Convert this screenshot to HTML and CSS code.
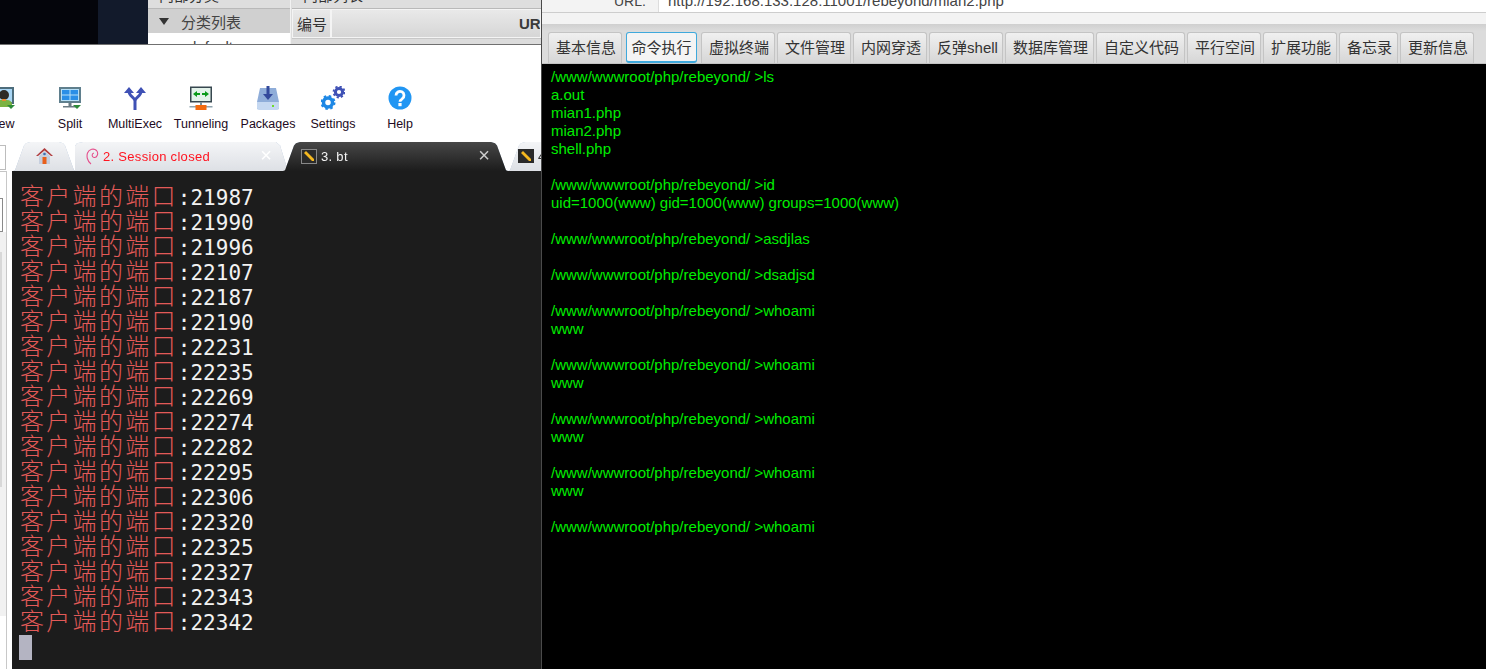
FILE: index.html
```html
<!DOCTYPE html>
<html lang="zh">
<head>
<meta charset="utf-8">
<title>Screenshot</title>
<link rel="stylesheet" href="styles.css">
</head>
<body>
<div class="page">
  <section class="left">
    <div class="backdrop">
      <div class="bd-black"></div>
      <div class="bd-navy"></div>
      <div class="tree">
        <div class="tree-head"><span>内部分类</span></div>
        <div class="tree-row"><span class="tri"></span><span>分类列表</span></div>
        <div class="tree-item">default</div>
      </div>
      <div class="list">
        <div class="list-head"><span>内部列表</span></div>
        <div class="list-cols">
          <div class="col col-id">编号</div>
          <div class="col col-url">URL</div>
        </div>
      </div>
    </div>

    <div class="toolbar">
      <div class="tool tool-view">
        <svg width="24" height="24" viewBox="0 0 24 24"><rect x="1" y="1" width="22" height="17" fill="#4d6d7c"/><rect x="3" y="3" width="18" height="13" fill="#a9d6f5"/><path d="M4 21c0-5 3-7 6-7h6c3 0 5 2 5 4v3z" fill="#7cb342"/><circle cx="13" cy="9" r="5" fill="#2e2a25"/><rect x="11" y="13" width="4" height="2" fill="#e68a2e"/><path d="M16 19h8l-4 4z" fill="#2e8b3a"/></svg>
        <span class="tool-label">View</span>
      </div>
      <div class="tool tool-split">
        <svg width="24" height="24" viewBox="0 0 24 24"><rect x="1" y="1" width="22" height="16" fill="#5f7f8d"/><rect x="3" y="3" width="18" height="12" fill="#b6dff7"/><rect x="4" y="4" width="7.500" height="4.500" fill="#2b8fe6"/><rect x="12.500" y="4" width="7.500" height="4.500" fill="#2b8fe6"/><rect x="4" y="9.500" width="7.500" height="4.500" fill="#2b8fe6"/><rect x="12.500" y="9.500" width="7.500" height="4.500" fill="#2b8fe6"/><rect x="10.500" y="17" width="3" height="3" fill="#6b7b83"/><rect x="5" y="20" width="13" height="1.500" fill="#6b7b83"/><path d="M15 19h8l-4 4z" fill="#2e8b3a"/></svg>
        <span class="tool-label">Split</span>
      </div>
      <div class="tool tool-multi">
        <svg width="24" height="24" viewBox="0 0 24 24"><path d="M12 24V15C12 11 6 11 6 5M12 15c0-4 6-4 6-10" fill="none" stroke="#3f51b5" stroke-width="3"/><path d="M1 7l5-6 5 6zM13 7l5-6 5 6z" fill="#3f51b5"/></svg>
        <span class="tool-label">MultiExec</span>
      </div>
      <div class="tool tool-tunnel">
        <svg width="24" height="24" viewBox="0 0 24 24"><rect x="1" y="0.500" width="22" height="16" fill="#37474f"/><rect x="2.500" y="2" width="19" height="13" fill="#e3f2ea"/><path d="M4 8l4-3v2h3v2H8v2zM20 8l-4-3v2h-3v2h3v2z" fill="#0a9a1a"/><rect x="11" y="16" width="2" height="4" fill="#78909c"/><rect x="0.500" y="20" width="23" height="1.500" fill="#90a4ae"/><rect x="6.500" y="19" width="11" height="5" fill="#f26a0f"/></svg>
        <span class="tool-label">Tunneling</span>
      </div>
      <div class="tool tool-pack">
        <svg width="24" height="24" viewBox="0 0 24 24"><path d="M4 2h16l3 14v7H1v-7z" fill="#8fadd9"/><path d="M1 16h22v6a2 2 0 0 1-2 2H3a2 2 0 0 1-2-2z" fill="#c5d8f1"/><rect x="10.500" y="0" width="3" height="10" fill="#33499b"/><path d="M7 8h10l-5 6z" fill="#33499b"/><rect x="16" y="19" width="2" height="2" fill="#6fdc2c"/></svg>
        <span class="tool-label">Packages</span>
      </div>
      <div class="tool tool-set">
        <svg width="24" height="24" viewBox="0 0 24 24"><circle cx="7" cy="16.500" r="4.500" fill="none" stroke="#1e88e5" stroke-width="3.500"/><circle cx="7" cy="16.500" r="6.500" fill="none" stroke="#1e88e5" stroke-width="2" stroke-dasharray="2.500 2.600"/><circle cx="18" cy="6" r="3.600" fill="none" stroke="#3f51b5" stroke-width="3"/><circle cx="18" cy="6" r="5.500" fill="none" stroke="#3f51b5" stroke-width="1.800" stroke-dasharray="2.200 2.100"/></svg>
        <span class="tool-label">Settings</span>
      </div>
      <div class="tool tool-help">
        <svg width="24" height="24" viewBox="0 0 24 24"><circle cx="12" cy="12" r="11.500" fill="#2196f3"/><path d="M8 9.500a4 4 0 1 1 6.300 3.200c-1.400 1-2.300 1.600-2.300 3" fill="none" stroke="#fff" stroke-width="2.800"/><rect x="10.400" y="17" width="3.200" height="3.200" fill="#fff"/></svg>
        <span class="tool-label">Help</span>
      </div>
    </div>

    <div class="tabbar">
      <div class="tab-stub"></div>
      <div class="tab-strip">
        <div class="tab tab-home">
          <svg width="17" height="16" viewBox="0 0 17 16"><path d="M3 8l5.500-5L14 8v8H3z" fill="#c6cfdf"/><path d="M8.500 0L0 8h2L8.500 2.500 15 8h2z" fill="#b03c3e"/><rect x="6.500" y="9" width="4" height="7" fill="#e8601c"/><circle cx="8.500" cy="6" r="1.300" fill="#3d6fb4"/></svg>
        </div>
        <div class="tab tab-closed">
          <svg class="swirl" width="13" height="17" viewBox="0 0 13 17"><path d="M5 16C1 13 0.500 8 1.500 5 3 1 8 0 10.500 2.500 13 5.500 11 10 8 9.500 5.500 9 5.500 5.500 8 5" fill="none" stroke="#e5508c" stroke-width="1.100"/></svg>
          <span class="tab-text">2. Session closed</span>
          <span class="tab-x">×</span>
        </div>
        <div class="tab tab-active">
          <span class="key key-on"><svg width="12" height="12" viewBox="0 0 12 12"><path d="M1 3l2-2 2 2 6 6v2H9z" fill="#f5b81f"/></svg></span>
          <span class="tab-text">3. bt</span>
          <span class="tab-x">×</span>
        </div>
        <div class="tab tab-next">
          <span class="key"><svg width="12" height="12" viewBox="0 0 12 12"><path d="M1 3l2-2 2 2 6 6v2H9z" fill="#f5b81f"/></svg></span>
          <span class="tab-text">4</span>
        </div>
      </div>
    </div>

    <div class="session">
      <div class="gutter">
        <div class="gutter-col">
          <div class="gutter-top"></div>
          <div class="gutter-box"></div>
          <div class="gutter-track"><div class="gutter-thumb"></div></div>
        </div>
      </div>
      <div class="terminal">
        <div class="line"><span class="cn">客户端的端口</span>:21987</div>
        <div class="line"><span class="cn">客户端的端口</span>:21990</div>
        <div class="line"><span class="cn">客户端的端口</span>:21996</div>
        <div class="line"><span class="cn">客户端的端口</span>:22107</div>
        <div class="line"><span class="cn">客户端的端口</span>:22187</div>
        <div class="line"><span class="cn">客户端的端口</span>:22190</div>
        <div class="line"><span class="cn">客户端的端口</span>:22231</div>
        <div class="line"><span class="cn">客户端的端口</span>:22235</div>
        <div class="line"><span class="cn">客户端的端口</span>:22269</div>
        <div class="line"><span class="cn">客户端的端口</span>:22274</div>
        <div class="line"><span class="cn">客户端的端口</span>:22282</div>
        <div class="line"><span class="cn">客户端的端口</span>:22295</div>
        <div class="line"><span class="cn">客户端的端口</span>:22306</div>
        <div class="line"><span class="cn">客户端的端口</span>:22320</div>
        <div class="line"><span class="cn">客户端的端口</span>:22325</div>
        <div class="line"><span class="cn">客户端的端口</span>:22327</div>
        <div class="line"><span class="cn">客户端的端口</span>:22343</div>
        <div class="line"><span class="cn">客户端的端口</span>:22342</div>
        <div class="cursor"></div>
      </div>
    </div>
  </section>

  <section class="right">
    <div class="urlbar">
      <span class="url-label">URL:</span>
      <div class="url-input">http://192.168.133.128:11001/rebeyond/mian2.php</div>
    </div>
    <div class="urlbar-foot"></div>
    <div class="tabs">
      <div class="btn">基本信息</div>
      <div class="btn btn-on">命令执行</div>
      <div class="btn">虚拟终端</div>
      <div class="btn">文件管理</div>
      <div class="btn">内网穿透</div>
      <div class="btn btn-tight">反弹shell</div>
      <div class="btn">数据库管理</div>
      <div class="btn">自定义代码</div>
      <div class="btn">平行空间</div>
      <div class="btn">扩展功能</div>
      <div class="btn">备忘录</div>
      <div class="btn">更新信息</div>
    </div>
    <pre class="console">/www/wwwroot/php/rebeyond/ &gt;ls
a.out
mian1.php
mian2.php
shell.php

/www/wwwroot/php/rebeyond/ &gt;id
uid=1000(www) gid=1000(www) groups=1000(www)

/www/wwwroot/php/rebeyond/ &gt;asdjlas

/www/wwwroot/php/rebeyond/ &gt;dsadjsd

/www/wwwroot/php/rebeyond/ &gt;whoami
www

/www/wwwroot/php/rebeyond/ &gt;whoami
www

/www/wwwroot/php/rebeyond/ &gt;whoami
www

/www/wwwroot/php/rebeyond/ &gt;whoami
www

/www/wwwroot/php/rebeyond/ &gt;whoami</pre>
  </section>
</div>
</body>
</html>
```
FILE: styles.css
```css
* { box-sizing: border-box; }
html, body { margin: 0; height: 100%; overflow: hidden; }
body { font-family: "Liberation Sans", "Noto Sans CJK SC", sans-serif; background: #fff; }
.page { display: flex; width: 1486px; height: 669px; overflow: hidden; }

/* left window */
.left { width: 541px; height: 669px; flex: none; display: flex; flex-direction: column; overflow: hidden; background: #fff; }
.backdrop { height: 45px; flex: none; display: flex; background: #dcdcdc; border-bottom: 1px solid #707070; overflow: hidden; }
.bd-black { width: 98px; background: #04050b; }
.bd-navy { width: 50px; background: #121a2b; }
.tree { width: 143px; display: flex; flex-direction: column; color: #333; border-right: 1px solid #f2f2f2; }
.tree-head, .list-head { height: 9px; font-size: 15px; line-height: 15px; padding-left: 11px; background: #dedede; border-bottom: 1px solid #b9b9b9; overflow: hidden; color: #333; flex: none; }
.tree-head span, .list-head span { display: block; margin-top: -12px; }
.tree-row { height: 24px; flex: none; background: #d0d0d0; display: flex; align-items: center; gap: 12px; padding-left: 11px; font-size: 15px; color: #444; }
.tri { width: 0; height: 0; border-left: 5px solid transparent; border-right: 5px solid transparent; border-top: 7px solid #333; }
.tree-item { flex: 1; background: #fff; font-size: 15px; line-height: 28px; padding-left: 40px; color: #444; overflow: hidden; }
.list { flex: 1; display: flex; flex-direction: column; min-width: 0; padding-left: 1px; }
.list-cols { display: flex; height: 30px; flex: none; border-bottom: 1px solid #c8c8c8; }
.col { display: flex; align-items: center; font-size: 15px; background: linear-gradient(#e9e9e9, #d6d6d6); color: #333; border: 1px solid #f4f4f4; }
.col-id { width: 39px; justify-content: center; padding-left: 1px; }
.col-url { flex: 1; padding-left: 187px; font-weight: 700; color: #3a3a3a; white-space: nowrap; overflow: hidden; }

.toolbar { height: 96px; flex: none; background: #fff; padding-top: 41px; display: flex; }
.tool { width: 70px; flex: none; display: flex; flex-direction: column; align-items: center; gap: 7px; color: #220a22; }
.tool-label { font-size: 12.500px; line-height: 14px; white-space: nowrap; }
.tool-view { margin-left: -34px; }
.tool-view svg { margin-left: 4px; }
.tool-split { margin-left: -1px; }
.tool-multi { margin-left: -5px; }
.tool-tunnel { margin-left: 0; width: 62px; }
.tool-pack { margin-left: 1px; }
.tool-set { margin-left: -5px; }
.tool-help { margin-left: -3px; }

.tabbar { height: 30px; flex: none; display: flex; align-items: flex-end; background: #fff; }
.tab-stub { width: 6px; height: 25px; margin-bottom: 1px; border: 1px solid #bdbdbd; border-left: 0; background: #fff; flex: none; }
.tab-strip { display: flex; align-items: flex-end; filter: drop-shadow(0 0 0.600px #a9bdd6); }
.tab { height: 29px; flex: none; display: flex; align-items: center; position: relative; background: linear-gradient(#f4f5f7, #dde0e5); clip-path: polygon(0 100%, 2px 97%, 11px 12%, 13px 4%, 17px 0, calc(100% - 17px) 0, calc(100% - 13px) 4%, calc(100% - 11px) 12%, calc(100% - 2px) 97%, 100% 100%); }
.tab-home { width: 63px; margin-left: 7px; justify-content: center; padding-bottom: 1px; }
.tab-closed { width: 213px; margin-left: -1px; padding-left: 11px; color: #ff1420; clip-path: polygon(0 100%, 0 14%, 2px 4%, 8px 0, calc(100% - 12px) 0, calc(100% - 8px) 12%, 100% 100%); padding-bottom: 1px; }
.tab-active { width: 225px; margin-left: -5px; padding-left: 18px; padding-bottom: 1px; color: #f4f4f4; background: linear-gradient(#474747, #1c1c1c); }
.tab-next { width: 60px; padding-left: 10px; padding-bottom: 1px; color: #333; }
.swirl { flex: none; margin-right: 4px; }
.tab-text { white-space: nowrap; font-size: 13px; letter-spacing: 0.300px; }
.tab-x { position: absolute; right: 16px; top: 3px; font-size: 20px; line-height: 20px; font-weight: 300; color: #fff; }
.tab-active .tab-x { right: 18px; color: #ccc; }
.key { width: 16px; height: 14px; flex: none; display: flex; align-items: center; justify-content: center; background: #2a2a2a; margin-right: 4px; }
.key-on { border: 1px solid #888; height: 15px; }

.session { flex: 1; display: flex; min-height: 0; }
.gutter { width: 12px; flex: none; background: #fff; }
.gutter-col { width: 7px; height: 100%; border-right: 1px solid #c8c8c8; display: flex; flex-direction: column; }
.gutter-top { height: 27px; flex: none; border-top: 1px solid #c5c5c5; }
.gutter-box { height: 34px; width: 3px; flex: none; border: 1px solid #8a8a8a; border-left: 0; }
.gutter-track { height: 384px; flex: none; background: #f1f1f1; }
.gutter-thumb { height: 235px; margin-top: 20px; width: 2px; background: #d8d8d8; }
.terminal { flex: 1; background: #1c1c1c; padding: 11px 0 0 8px; font-family: "DejaVu Sans Mono", "Noto Sans CJK SC", monospace; font-size: 21px; color: #f2f2f2; }
.line { height: 25px; line-height: 25px; white-space: nowrap; }
.cn { color: #e35a58; font-family: "Noto Sans CJK SC", sans-serif; font-size: 24px; font-weight: 300; letter-spacing: 2.300px; }
.cursor { width: 13px; height: 25px; margin-top: 3px; background: #b4b4c2; margin-left: -1px; }

/* right window */
.right { flex: 1; min-width: 0; display: flex; flex-direction: column; border-left: 1px solid #4a4a4a; background: #000; }
.urlbar { height: 13px; flex: none; display: flex; background: #f3f3f3; overflow: hidden; border-bottom: 1px solid #cdcdcd; }
.url-label { width: 116px; font-size: 14px; line-height: 1; margin-top: -6px; padding-left: 72px; color: #444; }
.url-input { flex: 1; background: #fff; border-left: 1px solid #ddd; font-size: 15px; line-height: 1; margin-top: -7px; padding-left: 9px; color: #444; height: 21px; }
.urlbar-foot { height: 11px; flex: none; background: #f3f3f3; }
.tabs { height: 40px; flex: none; display: flex; align-items: flex-end; gap: 2px; padding-left: 6px; background: linear-gradient(#cfcfcf, #dcdcdc 7px); border-bottom: 1px solid #c2c2c2; }
.btn { height: 31px; padding: 0 5px 0 7px; border: 1px solid #c4c4c4; border-bottom: 0; border-radius: 3px 3px 0 0; background: linear-gradient(#f0f0f0, #d6d6d6); color: #333; font-size: 15px; line-height: 29px; white-space: nowrap; }
.btn-on { border: 1px solid #3fa9dc; border-bottom: 2px solid #3fa9dc; background: #f4f4f4; border-radius: 3px; margin-left: 2px; margin-right: 2px; padding: 0 4.500px; }
.btn-tight { padding-right: 4px; }
.console { flex: 1; margin: 0; background: #000; color: #00ee00; font-family: "Liberation Sans", sans-serif; font-size: 15px; line-height: 18px; padding: 4px 0 0 9px; overflow: hidden; }
```
